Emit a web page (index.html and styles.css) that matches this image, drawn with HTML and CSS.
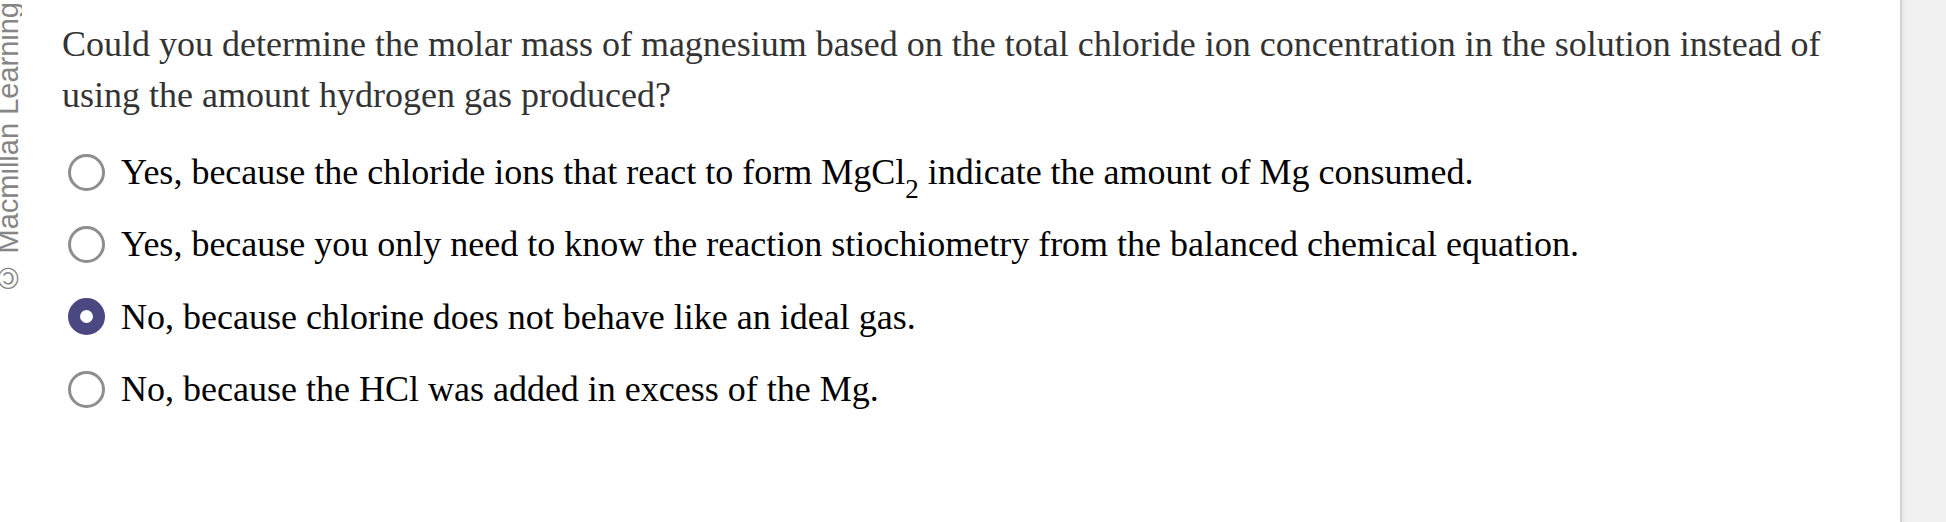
FILE: index.html
```html
<!DOCTYPE html>
<html lang="en">
<head>
<meta charset="utf-8">
<title>Question</title>
<link rel="stylesheet" href="styles.css">
</head>
<body>
<div class="page">
  <div class="watermark"><span class="watermark-text">© Macmillan Learning</span></div>
  <main class="content">
    <p class="question">Could you determine the molar mass of magnesium based on the total chloride ion concentration in the solution instead of using the amount hydrogen gas produced?</p>
    <ul class="options">
      <li class="option"><span class="radio"></span><span class="label">Yes, because the chloride ions that react to form MgCl<sub>2</sub> indicate the amount of Mg consumed.</span></li>
      <li class="option"><span class="radio"></span><span class="label">Yes, because you only need to know the reaction stiochiometry from the balanced chemical equation.</span></li>
      <li class="option"><span class="radio radio-checked"></span><span class="label">No, because chlorine does not behave like an ideal gas.</span></li>
      <li class="option"><span class="radio"></span><span class="label">No, because the HCl was added in excess of the Mg.</span></li>
    </ul>
  </main>
  <div class="sidebar"></div>
</div>
</body>
</html>
```

FILE: styles.css
```css
html, body {
  margin: 0;
  padding: 0;
  background: #ffffff;
}

.page {
  display: flex;
  width: 1946px;
  height: 522px;
  overflow: hidden;
}

.watermark {
  width: 22px;
  flex: none;
  overflow: hidden;
  display: flex;
  align-items: flex-start;
}

.watermark-text {
  writing-mode: vertical-rl;
  transform: rotate(180deg);
  font-family: "Liberation Sans", Arial, sans-serif;
  font-size: 29px;
  line-height: 29px;
  color: #868686;
  margin-left: -6px;
  margin-top: 2px;
  white-space: nowrap;
}

.content {
  flex: 1;
  padding: 19px 60px 0 40px;
  font-family: "Liberation Serif", "Times New Roman", serif;
}

.question {
  margin: 0;
  font-size: 36px;
  line-height: 51px;
  color: #333333;
}

.options {
  list-style: none;
  margin: 26px 0 0 0;
  padding: 0;
  display: flex;
  flex-direction: column;
  gap: 22.4px;
}

.option {
  display: flex;
  align-items: center;
  gap: 16px;
  font-size: 36px;
  line-height: 50px;
  color: #000000;
  padding-left: 6px;
}

.radio {
  flex: none;
  width: 31px;
  height: 31px;
  border: 3.5px solid #8e8e8e;
  border-radius: 50%;
  box-sizing: content-box;
  background: #ffffff;
}

.radio-checked {
  border: 12.5px solid #4b4780;
  width: 13px;
  height: 13px;
}

.label sub {
  font-size: 0.75em;
  line-height: 0;
  vertical-align: -0.5em;
}

.sidebar {
  width: 44px;
  flex: none;
  border-left: 2px solid #d2d2d2;
  background: linear-gradient(to right, #e6e6e6 0, #f1f1f1 5px, #f1f1f1 100%);
}
```
